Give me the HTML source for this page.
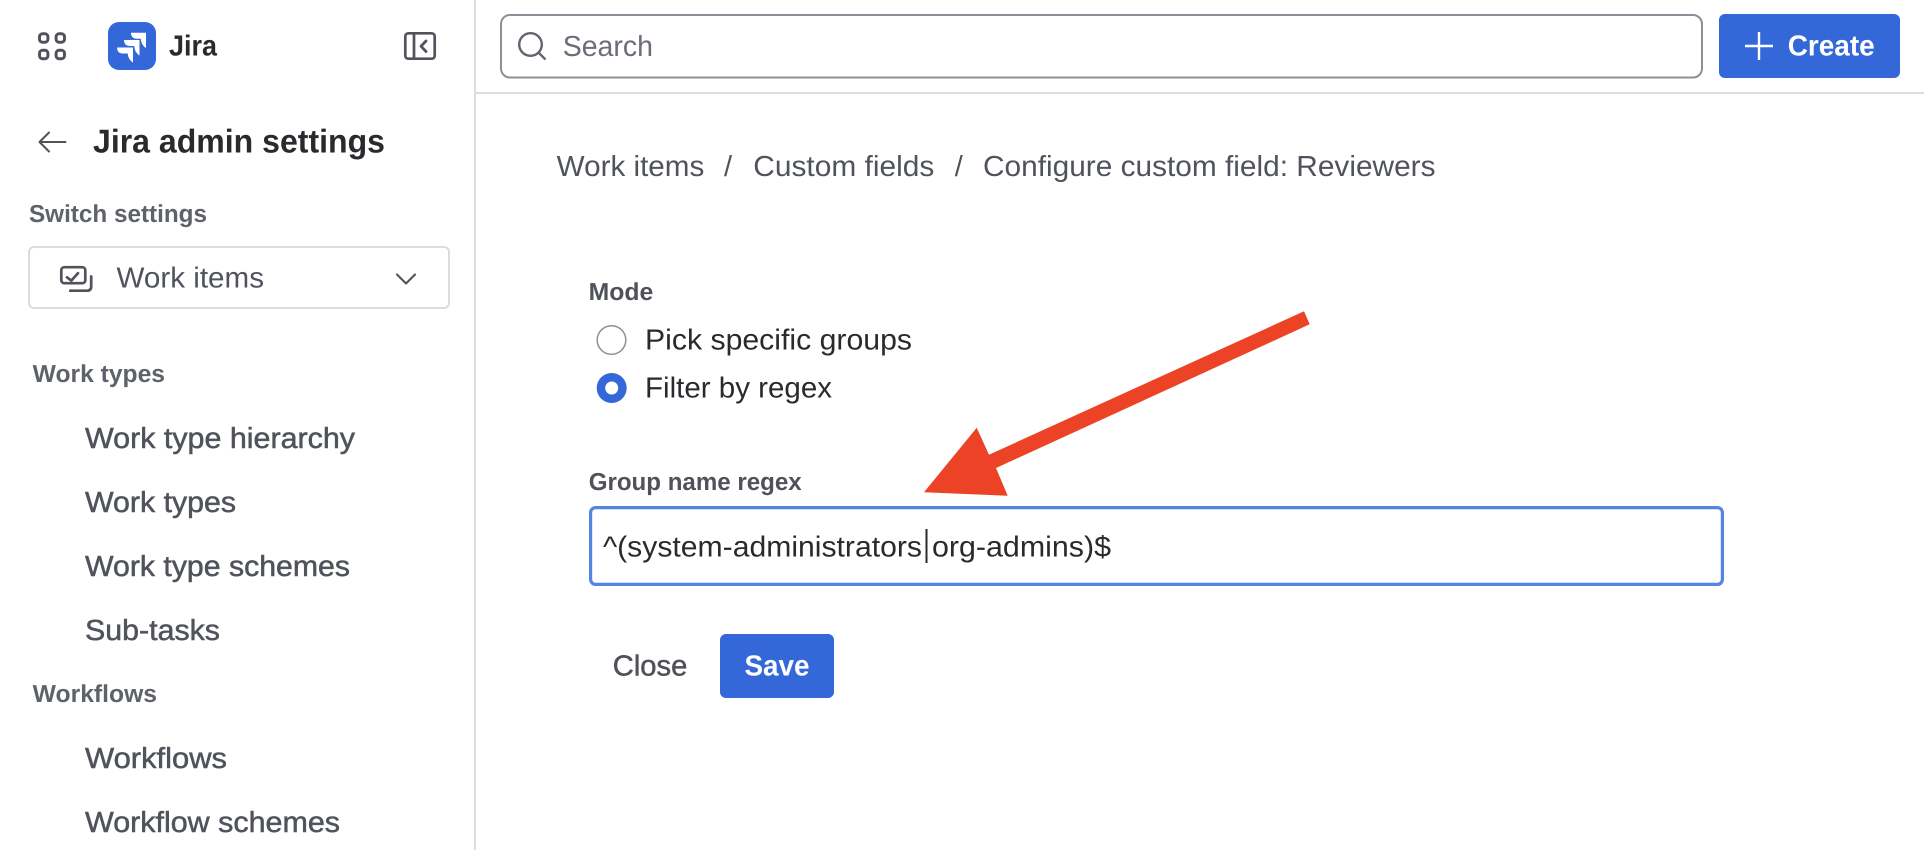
<!DOCTYPE html>
<html lang="en">
<head>
<meta charset="utf-8">
<title>Jira admin settings</title>
<style>
html,body{margin:0;padding:0;width:1924px;height:850px;overflow:hidden;background:#fff}
svg{display:block;position:absolute;left:0;top:0}
text{font-family:"Liberation Sans",Arial,sans-serif;font-size:29px;text-rendering:geometricPrecision}
.b{font-weight:700}
.lab{font-weight:700;font-size:24.5px;fill:#5f626b}
.nav{fill:#50535c;stroke:#50535c;stroke-width:.5}
.crumb{fill:#50535b}
.dark{fill:#292a2e}
.ico{fill:none;stroke:#50535b;stroke-width:2.7;stroke-linecap:round;stroke-linejoin:round}
</style>
</head>
<body>
<svg width="1924" height="850" viewBox="0 0 1924 850" xmlns="http://www.w3.org/2000/svg">
  <rect width="1924" height="850" fill="#fff"/>
  <!-- frame -->
  <rect x="474" y="0" width="2" height="850" fill="#dedede"/>
  <rect x="476" y="92" width="1448" height="2" fill="#dedede"/>

  <!-- app switcher -->
  <g class="ico">
    <rect x="39.5" y="33.8" width="8.4" height="8.4" rx="3" style="stroke-width:3"/>
    <rect x="56.1" y="33.8" width="8.4" height="8.4" rx="3" style="stroke-width:3"/>
    <rect x="39.5" y="50.3" width="8.4" height="8.4" rx="3" style="stroke-width:3"/>
    <rect x="56.1" y="50.3" width="8.4" height="8.4" rx="3" style="stroke-width:3"/>
  </g>

  <!-- Jira logo -->
  <rect x="108" y="22" width="48" height="48" rx="11" fill="#3468d8"/>
  <g fill="#fff">
    <path d="M131 32.7H146V48C143 46 141 43 140.8 38.7H136.5C133 38.7 131 36 131 32.7Z"/>
    <path d="M124 40H139.5V55.5C136.5 53.5 134.5 50.5 134.3 46H129.5C126 46 124 43.5 124 40Z"/>
    <path d="M117 47.5H133V62.5C130 60.5 128 57.5 127.8 53.5H122.5C119 53.5 117 51 117 47.5Z"/>
  </g>
  <text x="169" y="55.7" class="b dark" textLength="48" lengthAdjust="spacingAndGlyphs">Jira</text>

  <!-- collapse sidebar -->
  <g class="ico">
    <rect x="405.3" y="33.3" width="29.4" height="25.4" rx="3"/>
    <path d="M414 33.3V58.7"/>
    <path d="M426 41L421 46.2L426 51.5" style="stroke-width:2.8"/>
  </g>

  <!-- back + title -->
  <path class="ico" d="M65.5 142H40M49 132.5L39.5 142L49 151.5" style="stroke-width:2"/>
  <text x="93" y="152.7" class="b dark" style="font-size:33px" textLength="292" lengthAdjust="spacingAndGlyphs">Jira admin settings</text>

  <text x="29" y="222" class="lab" textLength="178" lengthAdjust="spacingAndGlyphs">Switch settings</text>

  <!-- switch select -->
  <rect x="29" y="247" width="420" height="61" rx="5" fill="#fff" stroke="#dcdcdc" stroke-width="2"/>
  <g class="ico">
    <rect x="61.3" y="267.2" width="24" height="16" rx="3"/>
    <path d="M67 277.3L71.3 280.6L78 273.2"/>
    <path d="M70.3 290.7H87Q91.2 290.7 91.2 286.5V276.5"/>
    <path d="M397 274.5L406 283.5L415 274.5" style="stroke-width:2.1"/>
  </g>
  <text x="116.5" y="287.5" style="fill:#50535c" textLength="147.5" lengthAdjust="spacingAndGlyphs">Work items</text>

  <!-- nav -->
  <text x="32.7" y="382" class="lab" textLength="132.3" lengthAdjust="spacingAndGlyphs">Work types</text>
  <text x="85" y="448" class="nav" textLength="270" lengthAdjust="spacingAndGlyphs">Work type hierarchy</text>
  <text x="85" y="512" class="nav" textLength="151" lengthAdjust="spacingAndGlyphs">Work types</text>
  <text x="85" y="576" class="nav" textLength="265" lengthAdjust="spacingAndGlyphs">Work type schemes</text>
  <text x="85" y="640" class="nav" textLength="135" lengthAdjust="spacingAndGlyphs">Sub-tasks</text>
  <text x="32.7" y="702" class="lab" textLength="124.3" lengthAdjust="spacingAndGlyphs">Workflows</text>
  <text x="85" y="768" class="nav" textLength="142" lengthAdjust="spacingAndGlyphs">Workflows</text>
  <text x="85" y="832" class="nav" textLength="255" lengthAdjust="spacingAndGlyphs">Workflow schemes</text>

  <!-- search -->
  <rect x="501" y="15" width="1201" height="62.5" rx="9" fill="#fff" stroke="#8c8f97" stroke-width="2"/>
  <g fill="none" stroke="#62656d" stroke-width="2.4" stroke-linecap="round">
    <circle cx="530.5" cy="44.5" r="11.3"/>
    <path d="M538.6 52.6L544.8 58.8"/>
  </g>
  <text x="562.7" y="56" style="fill:#6b6e76" textLength="90.3" lengthAdjust="spacingAndGlyphs">Search</text>

  <!-- create -->
  <rect x="1719" y="14" width="181" height="64" rx="6" fill="#3468d8"/>
  <path d="M1745 46H1773M1759 32V60" stroke="#fff" stroke-width="2.4" fill="none"/>
  <text x="1787.7" y="55.7" class="b" fill="#fff" textLength="87" lengthAdjust="spacingAndGlyphs">Create</text>

  <!-- breadcrumbs -->
  <text x="556.7" y="176" class="crumb" textLength="147.6" lengthAdjust="spacingAndGlyphs">Work items</text>
  <text x="724" y="176" class="crumb">/</text>
  <text x="753.3" y="176" class="crumb" textLength="181" lengthAdjust="spacingAndGlyphs">Custom fields</text>
  <text x="954.7" y="176" class="crumb">/</text>
  <text x="983" y="176" class="crumb" textLength="452.5" lengthAdjust="spacingAndGlyphs">Configure custom field: Reviewers</text>

  <!-- form -->
  <text x="588.7" y="300" class="lab" style="fill:#50525a" textLength="64.6" lengthAdjust="spacingAndGlyphs">Mode</text>
  <circle cx="611.5" cy="340" r="14.3" fill="#fff" stroke="#8c8f97" stroke-width="1.5"/>
  <text x="645" y="349.3" class="dark" textLength="267" lengthAdjust="spacingAndGlyphs">Pick specific groups</text>
  <circle cx="611.7" cy="388" r="15" fill="#3468d8"/>
  <circle cx="611.7" cy="388" r="6.5" fill="#fff"/>
  <text x="645" y="397.3" class="dark" textLength="187" lengthAdjust="spacingAndGlyphs">Filter by regex</text>

  <text x="588.7" y="490" class="lab" style="fill:#50525a" textLength="213" lengthAdjust="spacingAndGlyphs">Group name regex</text>
  <rect x="590.6" y="507.6" width="1131.8" height="76.8" rx="5" fill="#fff" stroke="#5585e3" stroke-width="3.2"/>
  <text x="603" y="556.7" class="dark" textLength="319" lengthAdjust="spacingAndGlyphs">^(system-administrators</text>
  <rect x="925.5" y="529" width="2" height="34" fill="#292a2e"/>
  <text x="932" y="556.7" class="dark" textLength="179" lengthAdjust="spacingAndGlyphs">org-admins)$</text>

  <text x="612.8" y="675.3" style="fill:#50525a;stroke:#50525a;stroke-width:.5" textLength="74.5" lengthAdjust="spacingAndGlyphs">Close</text>
  <rect x="720" y="634" width="114" height="64" rx="6" fill="#3468d8"/>
  <text x="744.5" y="675.3" class="b" fill="#fff" textLength="65" lengthAdjust="spacingAndGlyphs">Save</text>

  <!-- annotation arrow -->
  <polygon points="1304,311.3 1309.7,324.3 996,468 1007.7,495.7 924,492.3 976.7,427.7 989,454.7" fill="#ec4226"/>
</svg>
</body>
</html>
